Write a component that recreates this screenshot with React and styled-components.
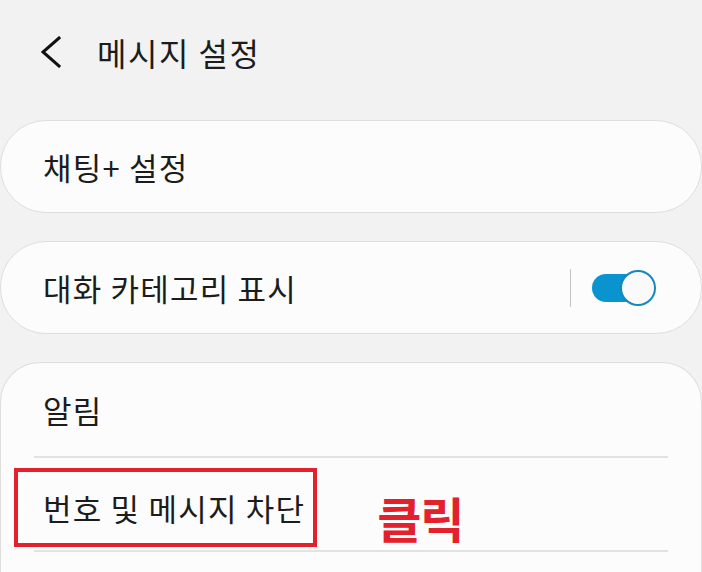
import React from 'react';
import styled, { createGlobalStyle } from 'styled-components';

const colors = {
  page: '#f2f2f2',
  card: '#fcfcfc',
  border: '#dedede',
  text: '#1c1c1c',
  line: '#e2e2e2',
  blue: '#0a94cf',
  red: '#e3202b',
};

const GlobalStyle = createGlobalStyle`
  body {
    margin: 0;
    background: ${colors.page};
    font-family: 'Noto Sans CJK KR', 'Noto Sans', sans-serif;
    color: ${colors.text};
  }
`;

const Screen = styled.div`
  width: 702px;
  height: 572px;
  overflow: hidden;
  background: ${colors.page};
`;

const Header = styled.header`
  display: flex;
  align-items: center;
  gap: 36px;
  height: 104px;
  padding-left: 41px;
`;

const Title = styled.h1`
  margin: 0;
  font-size: 32px;
  font-weight: 400;
  letter-spacing: 1.5px;
`;

const List = styled.div`
  display: flex;
  flex-direction: column;
  gap: 28px;
  padding-top: 16px;
`;

const Card = styled.div`
  box-sizing: border-box;
  display: flex;
  align-items: center;
  height: 93px;
  padding: 0 45px 0 42px;
  background: ${colors.card};
  border: 1px solid ${colors.border};
  border-radius: 46px;
`;

const GroupCard = styled.div`
  box-sizing: border-box;
  display: flex;
  flex-direction: column;
  padding: 0 33px;
  background: ${colors.card};
  border: 1px solid ${colors.border};
  border-bottom: none;
  border-radius: 40px 40px 0 0;
  height: 260px;
`;

const Label = styled.span`
  flex: 1;
  font-size: 31px;
  letter-spacing: 1.2px;
  line-height: 1;
  white-space: nowrap;
`;

const Row = styled.div`
  display: flex;
  align-items: center;
  height: ${p => p.$height}px;
  padding-left: 9px;
  border-bottom: 2px solid ${colors.line};
`;

const Divider = styled.span`
  width: 1px;
  height: 38px;
  background: #c4c4c4;
  margin-right: 21px;
`;

const Switch = styled.span`
  position: relative;
  display: inline-flex;
  align-items: center;
  width: 64px;
  height: 36px;
`;

const Track = styled.span`
  width: 48px;
  height: 28px;
  border-radius: 14px;
  background: ${colors.blue};
`;

const Knob = styled.span`
  position: absolute;
  right: 0;
  top: 0;
  box-sizing: border-box;
  width: 36px;
  height: 36px;
  border-radius: 50%;
  background: #fafafa;
  border: 2px solid #1688bd;
`;

const Highlight = styled.div`
  display: flex;
  align-items: center;
  box-sizing: border-box;
  height: 79px;
  margin: 7px 0 0 -29px;
  padding: 0 8px 0 25px;
  border: 4px solid ${colors.red};
`;

const ClickNote = styled.span`
  margin: 26px 0 0 60px;
  font-size: 48px;
  font-weight: 700;
  letter-spacing: -1px;
  line-height: 1;
  color: ${colors.red};
`;

function BackIcon() {
  return (
    <svg width="20" height="32" viewBox="0 0 20 32">
      <polyline
        points="18,2 2,16 18,30"
        fill="none"
        stroke="#111"
        strokeWidth="3"
        strokeLinecap="square"
      />
    </svg>
  );
}

function Toggle() {
  return (
    <Switch>
      <Track />
      <Knob />
    </Switch>
  );
}

export default function App() {
  return (
    <Screen>
      <GlobalStyle />
      <Header>
        <BackIcon />
        <Title>메시지 설정</Title>
      </Header>
      <List>
        <Card>
          <Label>채팅+ 설정</Label>
        </Card>
        <Card>
          <Label>대화 카테고리 표시</Label>
          <Divider />
          <Toggle />
        </Card>
        <GroupCard>
          <Row $height={93}>
            <Label>알림</Label>
          </Row>
          <Row $height={92}>
            <Highlight>
              <Label>번호 및 메시지 차단</Label>
            </Highlight>
            <ClickNote>클릭</ClickNote>
          </Row>
        </GroupCard>
      </List>
    </Screen>
  );
}
